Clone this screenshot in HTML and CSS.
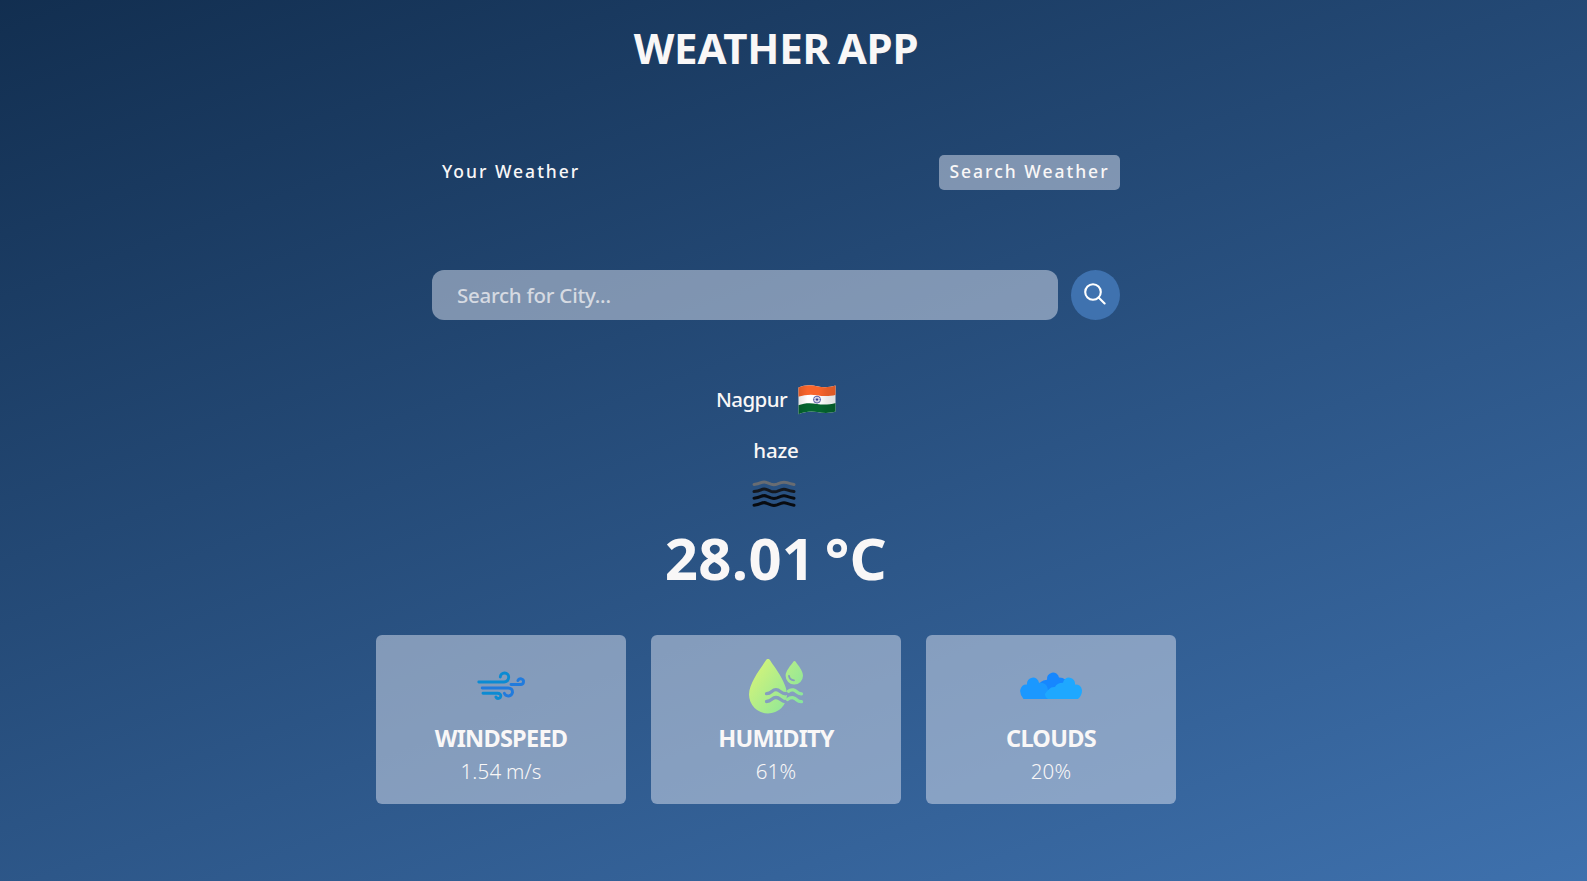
FILE: index.html
```
<!DOCTYPE html>
<html lang="en">
<head>
<meta charset="utf-8">
<title>Weather App</title>
<link rel="stylesheet" href="styles.css">
</head>
<body>
<main class="wrapper">
  <h1 class="title">WEATHER APP</h1>
  <nav class="tabs">
    <button class="tab tab-your">Your Weather</button>
    <button class="tab tab-search active">Search Weather</button>
  </nav>
  <form class="search">
    <input class="search-input" type="text" placeholder="Search for City...">
    <button class="search-btn" type="button" aria-label="Search">
      <svg width="22" height="22" viewBox="0 0 22 22" fill="none" stroke="#fff" stroke-width="2.1" stroke-linecap="round"><circle cx="9" cy="9" r="7.8"/><path d="M14.6 14.6 20.6 20.4"/></svg>
    </button>
  </form>
  <section class="weather">
    <div class="place">
      <p class="city">Nagpur</p>
      <svg class="flag" width="38" height="30" viewBox="0 0 38 30">
        <defs>
          <clipPath id="flagShape"><path d="M.5 2.5C7-.4 13-.2 19 1.200S31 2.500 37.500.6V26.500C31 28.600 25 28.100 19 27S7 26.500.5 29.200Z"/></clipPath>
          <linearGradient id="shade"><stop offset="0" stop-color="#000" stop-opacity=".12"/><stop offset=".25" stop-opacity="0"/><stop offset=".55" stop-opacity="0"/><stop offset=".75" stop-opacity=".08"/><stop offset="1" stop-opacity=".12"/></linearGradient>
        </defs>
        <g clip-path="url(#flagShape)">
          <path fill="#fff" d="M0 0h38v30H0z"/>
          <path fill="#f9652b" d="M0 0H38V9.700C31 11.600 25 11.300 19 10.200S7 9.600 0 11.700Z"/>
          <path fill="#04652f" d="M0 20.300C7 17.700 13 17.800 19 18.900S31 19.700 38 18V30H0Z"/>
          <path fill="url(#shade)" d="M0 0h38v30H0z"/>
          <g stroke="#34388f" fill="none"><circle cx="19" cy="14.600" r="3.500" stroke-width=".8"/><path stroke-width=".45" d="M19 11v7.200M15.400 14.600h7.200M16.500 12.100l5 5M21.500 12.100l-5 5"/></g>
          <circle cx="19" cy="14.600" r="1" fill="#34388f"/>
        </g>
      </svg>
    </div>
    <p class="desc">haze</p>
    <svg class="haze" width="44" height="28" viewBox="0 0 44 28" fill="none" stroke-width="3" stroke-linecap="round">
      <path stroke="#686c72" d="M2 4.500Q6 4.200 9 2.700T15 2.600L19 4.200Q22 5.200 25 4.200L29 2.700Q32 1.600 35 2.700T42 4.500"/>
      <path stroke="#14181f" d="M2 11.600Q6 11.300 9 9.800T15 9.700L19 11.300Q22 12.300 25 11.300L29 9.800Q32 8.700 35 9.800T42 11.600"/>
      <path stroke="#080b10" d="M2 18.200Q6 17.900 9 16.400T15 16.300L19 17.900Q22 18.900 25 17.900L29 16.400Q32 15.300 35 16.400T42 18.200"/>
      <path stroke="#080b10" d="M2 25.200Q6 24.900 9 23.400T15 23.300L19 24.900Q22 25.900 25 24.900L29 23.400Q32 22.300 35 23.400T42 25.200"/>
    </svg>
    <p class="temp">28.01 °C</p>
    <div class="cards">
      <article class="card">
        <svg class="icon" width="62" height="56" viewBox="0 -2 62 56" fill="none" stroke-width="2.900" stroke-linecap="round">
          <path stroke="#0b8bd3" d="M8.800 22H34Q38.500 21.500 38.700 17.300A4.200 4.200 0 0 0 30.300 17"/>
          <path stroke="#217bdd" d="M41 24.500H50.500A2.900 2.900 0 1 0 47.900 20.600"/>
          <path stroke="#217bdd" d="M12.200 28H38Q42.700 28 42.500 32.500A4.300 4.300 0 0 1 34.300 33.300"/>
          <path stroke="#0b8bd3" d="M13 33.300H27.500Q31 33.400 30.800 36A2.600 2.600 0 0 1 25.900 37"/>
        </svg>
        <h2 class="card-title wind">WINDSPEED</h2>
        <p class="card-value speed">1.54 m/s</p>
      </article>
      <article class="card">
        <svg class="icon" width="62" height="56" viewBox="0 -.5 62 56">
          <defs>
            <linearGradient id="lime" gradientUnits="userSpaceOnUse" x1="7" y1="14" x2="55" y2="48"><stop stop-color="#d0f37b"/><stop offset="1" stop-color="#86e59d"/></linearGradient>
            <mask id="cut" maskUnits="userSpaceOnUse" x="0" y="0" width="62" height="56">
              <path fill="#fff" d="M0 0h62v56H0z"/>
              <g stroke="#000" fill="none" stroke-width="3.300" stroke-linecap="round"><path d="M21.500 35.200C27 35.200 26.500 31.200 31 31.200S36 35.700 41 35.200"/><path d="M21.500 43C27 43 26.500 39 31 39S36 43.500 40.500 43"/></g>
            </mask>
          </defs>
          <path fill="url(#lime)" mask="url(#cut)" d="M21.300 1.300Q23 -.6 24.700 1.300C29 8 42 24 42 36A19 19 0 0 1 4 36C4 24 17 8 21.300 1.300Z"/>
          <path fill="url(#lime)" d="M48.300 3.200Q49.500 1.800 50.700 3.200C53 6.700 58 12 58 17.300A8.700 8.700 0 0 1 40.600 17.300C40.600 12 46 6.700 48.300 3.200Z"/>
          <path d="M44 17.300Q44.500 21.300 49 21.800" fill="none" stroke="#879dbf" stroke-width="1.800" stroke-linecap="round"/>
          <g stroke="url(#lime)" stroke-width="3.300" fill="none" stroke-linecap="round"><path d="M43.500 32.700Q45.300 31 48.300 31.400C52 32 51.700 35.500 56.500 35.300"/><path d="M42.500 41Q45.300 38.800 48.300 39.300C52 40 51.700 43.400 56.500 43.200"/></g>
        </svg>
        <h2 class="card-title humid">HUMIDITY</h2>
        <p class="card-value percent">61%</p>
      </article>
      <article class="card">
        <svg class="icon" width="62" height="56" viewBox="0 -.8 62 56">
          <path fill="#1687ff" d="M18 40.300V29Q19 21.500 27 21A5.800 5.800 0 0 1 39 18.700Q47 18.500 47 27L40 40.300Z"/>
          <path fill="#1b98ff" d="M3.500 40.300Q-.5 35.500.300 31Q1.800 25.300 7 25.700A6 6 0 1 1 19 24Q26 23.500 27.500 29L30 40.300Z"/>
          <path fill="#1ea8ff" d="M28 40.300Q24.500 38 25 35Q27 32 29 30.500Q31 28 35 28.300Q36.500 24.200 43 24A5.900 5.900 0 1 1 55 25.700Q61 25.500 61.900 31Q62.500 36 58 40.300Z"/>
        </svg>
        <h2 class="card-title clouds">CLOUDS</h2>
        <p class="card-value percent">20%</p>
      </article>
    </div>
  </section>
</main>
</body>
</html>
```
FILE: styles.css
```
* { box-sizing: border-box; margin: 0; padding: 0; font-family: "Noto Sans", "Open Sans", sans-serif; }
body { min-height: 881px; overflow: hidden; color: #f9f7f7; background: linear-gradient(160deg, #112d4e -2%, #3f72af 102%); }
.wrapper { width: 1552px; height: 881px; display: flex; flex-direction: column; align-items: center; overflow: hidden; }
.title { margin-top: 19px; font-size: 42px; line-height: 58px; font-weight: 700; letter-spacing: -.2px; word-spacing: -3px; white-space: nowrap; }
.tabs { width: 688px; margin-top: 78px; display: flex; justify-content: space-between; }
.tab { height: 35px; padding: 0 10px 2px; border: 0; border-radius: 5px; background: none; color: #f9f7f7; font-size: 17.500px; line-height: 33px; font-weight: 500; letter-spacing: 2px; white-space: nowrap; }
.tab-search { width: 181px; padding: 0 0 2px; }
.active { background: rgba(219, 226, 239, .5); }
.search { width: 688px; margin-top: 80px; display: flex; gap: 13px; }
.search-input { width: 626px; height: 50px; padding: 0 25px; border: 0; border-radius: 12px; outline: 0; background: rgba(219, 226, 239, .5); font-size: 20.500px; font-weight: 500; letter-spacing: -0.25px; color: #f9f7f7; }
.search-input::placeholder { color: rgba(249, 247, 247, .72); }
.search-btn { width: 49px; height: 50px; padding: 0 2px 3px 0; border: 0; border-radius: 50%; background: #3f72af; display: flex; align-items: center; justify-content: center; }
.weather { width: 800px; display: flex; flex-direction: column; align-items: center; }
.place { height: 30px; margin-top: 65px; display: flex; align-items: center; gap: 11px; }
.city, .desc { font-size: 20.500px; line-height: 28px; font-weight: 500; letter-spacing: -0.6px; white-space: nowrap; }
.city { padding-bottom: 2px; }
.desc { margin-top: 21px; letter-spacing: -0.2px; }
.haze { margin: 16px 4px 0 0; }
.temp { margin-top: 11px; font-size: 58px; line-height: 78px; font-weight: 700; letter-spacing: .3px; word-spacing: -6px; white-space: nowrap; }
.cards { width: 800px; margin-top: 38px; display: grid; grid-template-columns: repeat(3, 1fr); gap: 25px; }
.card { height: 169px; padding-top: 23px; display: flex; flex-direction: column; align-items: center; border-radius: 6px; background: rgba(219, 226, 239, .5); }
.icon { flex: none; }
.card-title { margin-top: 8px; font-size: 23.500px; line-height: 32px; font-weight: 700; letter-spacing: -.75px; white-space: nowrap; }
.card-value { margin-top: 2px; font-size: 20.500px; line-height: 30px; font-weight: 300; white-space: nowrap; }
.speed { letter-spacing: .2px; word-spacing: -1px; }
.percent { letter-spacing: .2px; }
```
